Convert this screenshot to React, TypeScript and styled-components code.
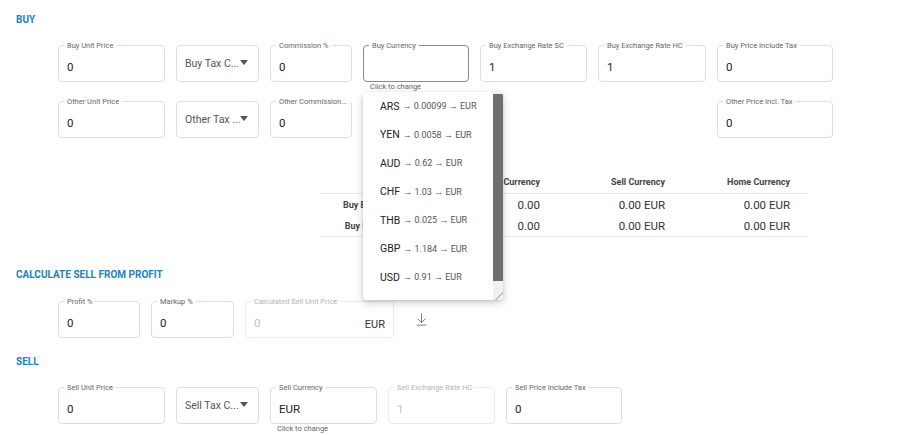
import styled, { createGlobalStyle, css } from "styled-components";
import { ArrowDownToLine } from "lucide-react";

const GlobalStyle = createGlobalStyle`
    html, body {
        margin: 0;
        padding: 0;
        background: #fff;
        font-family: Roboto, "Liberation Sans", Arial, sans-serif;
        color: #222;
    }
`;

const rates = [
    { code: "ARS", rate: "0.00099" },
    { code: "YEN", rate: "0.0058" },
    { code: "AUD", rate: "0.62" },
    { code: "CHF", rate: "1.03" },
    { code: "THB", rate: "0.025" },
    { code: "GBP", rate: "1.184" },
    { code: "USD", rate: "0.91" },
];

type FieldProps = {
    label: string;
    value?: string;
    width: number;
    focused?: boolean;
    disabled?: boolean;
    helper?: string;
    suffix?: string;
    children?: React.ReactNode;
};

const Field = ({ label, value, width, focused, disabled, helper, suffix, children }: FieldProps) => (
    <FieldWrap $width={width}>
        <Box $focused={focused} $disabled={disabled}>
            <Label $disabled={disabled}>{label}</Label>
            <Value $disabled={disabled}>{value}</Value>
            {suffix && <Suffix>{suffix}</Suffix>}
        </Box>
        {helper && <Helper>{helper}</Helper>}
        {children}
    </FieldWrap>
);

const Select = ({ text, width }: { text: string; width: number }) => (
    <FieldWrap $width={width}>
        <SelectBox>
            <SelectText>{text}</SelectText>
            <Caret />
        </SelectBox>
    </FieldWrap>
);

const CurrencyMenu = () => (
    <Dropdown>
        <OptionList>
            {rates.map((r) => (
                <Option key={r.code}>
                    {r.code}
                    <Rate>→ {r.rate} → EUR</Rate>
                </Option>
            ))}
        </OptionList>
        <Track>
            <Thumb />
            <Grip />
        </Track>
    </Dropdown>
);

export default function App() {
    return (
        <Page>
            <GlobalStyle />
            <Heading>Buy</Heading>
            <BuyGrid>
                <Field label="Buy Unit Price" value="0" width={107} />
                <Select text="Buy Tax C..." width={83} />
                <Field label="Commission %" value="0" width={82} />
                <Field label="Buy Currency" width={106} focused helper="Click to change">
                    <CurrencyMenu />
                </Field>
                <Field label="Buy Exchange Rate SC" value="1" width={107} />
                <Field label="Buy Exchange Rate HC" value="1" width={108} />
                <Field label="Buy Price Include Tax" value="0" width={116} />

                <Field label="Other Unit Price" value="0" width={107} />
                <Select text="Other Tax ..." width={83} />
                <Field label="Other Commission..." value="0" width={82} />
                <LastColumn>
                    <Field label="Other Price Incl. Tax" value="0" width={116} />
                </LastColumn>
            </BuyGrid>

            <Summary>
                <SummaryRow $head>
                    <span />
                    <HeadCell>Buy Currency</HeadCell>
                    <HeadCell>Sell Currency</HeadCell>
                    <HeadCell>Home Currency</HeadCell>
                </SummaryRow>
                <SummaryRow>
                    <RowLabel>Buy Excl. Tax</RowLabel>
                    <Cell>0.00</Cell>
                    <Cell>0.00 EUR</Cell>
                    <Cell>0.00 EUR</Cell>
                </SummaryRow>
                <SummaryRow $last>
                    <RowLabel>Buy Incl. Tax</RowLabel>
                    <Cell>0.00</Cell>
                    <Cell>0.00 EUR</Cell>
                    <Cell>0.00 EUR</Cell>
                </SummaryRow>
            </Summary>

            <Heading $top={31}>Calculate sell from profit</Heading>
            <FieldRow>
                <Field label="Profit %" value="0" width={82} />
                <Field label="Markup %" value="0" width={83} />
                <Field label="Calculated Sell Unit Price" value="0" width={149} disabled suffix="EUR" />
                <IconButton>
                    <ArrowDownToLine size={15} strokeWidth={1.4} color="#6a6a6a" />
                </IconButton>
            </FieldRow>

            <Heading $top={17}>Sell</Heading>
            <FieldRow $top={18}>
                <Field label="Sell Unit Price" value="0" width={107} />
                <Select text="Sell Tax C..." width={83} />
                <Field label="Sell Currency" value="EUR" width={107} helper="Click to change" />
                <Field label="Sell Exchange Rate HC" value="1" width={107} disabled />
                <Field label="Sell Price Include Tax" value="0" width={116} />
            </FieldRow>
        </Page>
    );
}

const Page = styled.div`
    padding: 13px 0 0 16px;
    width: 905px;
    box-sizing: border-box;
`;

const Heading = styled.h2<{ $top?: number }>`
    margin: ${(p) => p.$top ?? 0}px 0 0;
    font-size: 10px;
    line-height: 14px;
    font-weight: 700;
    text-transform: uppercase;
    color: #2282b9;
`;

const BuyGrid = styled.div`
    display: grid;
    grid-template-columns: 107px 83px 82px 106px 107px 108px 116px;
    column-gap: 11px;
    row-gap: 9px;
    align-items: start;
    margin: 18px 0 0 42px;
`;

const LastColumn = styled.div`
    grid-column: 7;
`;

const FieldRow = styled.div<{ $top?: number }>`
    display: flex;
    align-items: flex-start;
    gap: 11px;
    margin: ${(p) => p.$top ?? 19}px 0 0 42px;
`;

const FieldWrap = styled.div<{ $width: number }>`
    position: relative;
    width: ${(p) => p.$width}px;
    flex-shrink: 0;
`;

const Box = styled.div<{ $focused?: boolean; $disabled?: boolean }>`
    position: relative;
    height: 37px;
    box-sizing: border-box;
    border: 1px solid #dedede;
    border-radius: 4px;
    padding: 13px 8px 0;
    display: flex;
    align-items: flex-start;
    justify-content: space-between;

    ${(p) =>
        p.$focused &&
        css`
            border: 1.5px solid #8a8a8a;
        `}

    ${(p) =>
        p.$disabled &&
        css`
            border-color: #ececec;
        `}
`;

const Label = styled.span<{ $disabled?: boolean }>`
    position: absolute;
    top: -5px;
    left: 5px;
    padding: 0 3px;
    background: #fff;
    font-size: 7.5px;
    line-height: 9px;
    color: ${(p) => (p.$disabled ? "#b4b4b4" : "#666")};
    white-space: nowrap;
`;

const Value = styled.span<{ $disabled?: boolean }>`
    font-size: 11.5px;
    line-height: 16px;
    color: ${(p) => (p.$disabled ? "#c2c2c2" : "#222")};
`;

const Suffix = styled.span`
    font-size: 11px;
    line-height: 16px;
    margin-top: 2px;
    color: #333;
`;

const Helper = styled.div`
    font-size: 7.5px;
    line-height: 10px;
    color: #666;
    padding-left: 7px;
`;

const SelectBox = styled.div`
    height: 37px;
    box-sizing: border-box;
    border: 1px solid #dedede;
    border-radius: 4px;
    padding: 0 10px 0 8px;
    display: flex;
    align-items: center;
    justify-content: space-between;
`;

const SelectText = styled.span`
    font-size: 10.5px;
    color: #555;
    white-space: nowrap;
`;

const Caret = styled.span`
    width: 0;
    height: 0;
    border-left: 4.5px solid transparent;
    border-right: 4.5px solid transparent;
    border-top: 5px solid #555;
    margin-top: -2px;
`;

const Dropdown = styled.div`
    position: absolute;
    top: 47px;
    left: 0;
    z-index: 10;
    width: 140px;
    height: 208px;
    display: flex;
    background: #fff;
    border-radius: 4px;
    box-shadow: 0 3px 10px rgba(0, 0, 0, 0.18), 0 1px 3px rgba(0, 0, 0, 0.12);
    overflow: hidden;
`;

const OptionList = styled.ul`
    flex: 1;
    margin: 0;
    padding: 0;
    list-style: none;
`;

const Option = styled.li`
    height: 28.5px;
    display: flex;
    align-items: center;
    padding-left: 17px;
    font-size: 10.5px;
    color: #222;
    white-space: nowrap;
`;

const Rate = styled.span`
    font-size: 9px;
    color: #555;
    margin-left: 3px;
`;

const Track = styled.div`
    width: 10px;
    display: flex;
    flex-direction: column;
    background: #f1f1f1;
`;

const Thumb = styled.div`
    height: 187px;
    margin-top: 2px;
    background: #6e6e6e;
`;

const Grip = styled.div`
    margin-top: auto;
    height: 8px;
    background: linear-gradient(135deg, transparent 55%, #bdbdbd 55%, #bdbdbd 65%, transparent 65%);
`;

const Summary = styled.div`
    width: 488px;
    margin: 33px 0 0 304px;
`;

const SummaryRow = styled.div<{ $head?: boolean; $last?: boolean }>`
    display: grid;
    grid-template-columns: 76px 144px 125px 125px;
    align-items: center;
    height: ${(p) => (p.$head ? 22 : 21)}px;
    border-bottom: ${(p) => (p.$head || p.$last ? "1px solid #e6e6e6" : "none")};
`;

const HeadCell = styled.span`
    text-align: right;
    font-size: 9px;
    font-weight: 700;
    color: #444;
`;

const RowLabel = styled.span`
    text-align: right;
    font-size: 9px;
    font-weight: 700;
    color: #444;
    white-space: nowrap;
`;

const Cell = styled.span`
    text-align: right;
    font-size: 11.5px;
    color: #333;
`;

const IconButton = styled.button`
    align-self: center;
    margin-left: 5px;
    margin-top: 0;
    padding: 4px;
    border: none;
    background: none;
    display: flex;
    cursor: pointer;
`;
